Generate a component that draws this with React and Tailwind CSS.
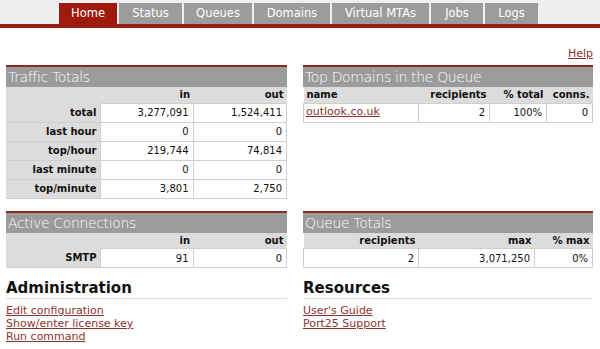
import React from 'react';

const tabs = [
    { label: 'Home', w: 'w-[58px]', active: true },
    { label: 'Status', w: 'w-[63px]' },
    { label: 'Queues', w: 'w-[68px]' },
    { label: 'Domains', w: 'w-[76px]' },
    { label: 'Virtual MTAs', w: 'w-[97px]' },
    { label: 'Jobs', w: 'w-[52px]' },
    { label: 'Logs', w: 'w-[53px]' },
];

const Panel = ({ title, children }) => (
    <div className="border-t-2 border-[#8a2a22]">
        <div className="h-[20px] bg-[#9b9b9b] text-white text-[14px] font-extralight leading-[20px] px-[2px] tracking-tight">
            {title}
        </div>
        {children}
    </div>
);

const td = 'border border-[#d0d0d0] bg-white text-right px-[4px] h-[19px]';
const th = 'bg-[#dcdcdc] font-bold text-right px-[3px] h-[16px]';
const lbl = 'bg-[#dcdcdc] font-bold text-right px-[3px] border-b border-[#d0d0d0]';

const Link = ({ children, className = '' }) => (
    <a href="#" className={`text-[#8a3530] underline ${className}`}>{children}</a>
);

export default function App() {
    const traffic = [
        ['total', '3,277,091', '1,524,411'],
        ['last hour', '0', '0'],
        ['top/hour', '219,744', '74,814'],
        ['last minute', '0', '0'],
        ['top/minute', '3,801', '2,750'],
    ];

    return (
        <div className="w-[600px] h-[349px] bg-white overflow-hidden text-[#111]" style={{ fontFamily: '"DejaVu Sans", Verdana, sans-serif' }}>
            {/* tab bar */}
            <div className="bg-[#efefef] pt-[3px]">
                <div className="flex gap-[2px] pl-[59px]">
                    {tabs.map(t => (
                        <div
                            key={t.label}
                            className={`${t.w} h-[21px] text-center text-[11.5px] leading-[21px] text-white ${t.active ? 'bg-[#a01a0b]' : 'bg-[#9c9c9c]'}`}
                        >
                            {t.label}
                        </div>
                    ))}
                </div>
            </div>
            <div className="h-[4px] bg-[#9c1c10]"></div>

            <div className="flex justify-end pr-[7px] pt-[19px] h-[37px] text-[11px] leading-[13px]">
                <Link>Help</Link>
            </div>

            <div className="flex gap-[16px] pl-[6px] pr-[7px] text-[10px]">
                {/* left column */}
                <div className="w-[281px] flex flex-col">
                    <Panel title="Traffic Totals">
                        <table className="w-full border-collapse">
                            <thead>
                                <tr>
                                    <th className={`${th} w-[94px]`}></th>
                                    <th className={`${th} w-[93px]`}>in</th>
                                    <th className={th}>out</th>
                                </tr>
                            </thead>
                            <tbody>
                                {traffic.map(r => (
                                    <tr key={r[0]}>
                                        <td className={lbl}>{r[0]}</td>
                                        <td className={td}>{r[1]}</td>
                                        <td className={td}>{r[2]}</td>
                                    </tr>
                                ))}
                            </tbody>
                        </table>
                    </Panel>

                    <div className="mt-[12px]">
                        <Panel title="Active Connections">
                            <table className="w-full border-collapse">
                                <thead>
                                    <tr>
                                        <th className={`${th} w-[94px]`}></th>
                                        <th className={`${th} w-[93px]`}>in</th>
                                        <th className={th}>out</th>
                                    </tr>
                                </thead>
                                <tbody>
                                    <tr>
                                        <td className={lbl}>SMTP</td>
                                        <td className={td}>91</td>
                                        <td className={td}>0</td>
                                    </tr>
                                </tbody>
                            </table>
                        </Panel>
                    </div>

                    <div className="mt-[11px]">
                        <h2 className="text-[15px] font-bold leading-[18px] pb-[1px] border-b border-[#dddddd]">Administration</h2>
                        <div className="flex flex-col items-start text-[11px] leading-[13px] pt-[5px]">
                            <Link>Edit configuration</Link>
                            <Link>Show/enter license key</Link>
                            <Link>Run command</Link>
                        </div>
                    </div>
                </div>

                {/* right column */}
                <div className="w-[290px] flex flex-col">
                    <Panel title="Top Domains in the Queue">
                        <table className="w-full border-collapse">
                            <thead>
                                <tr>
                                    <th className={`${th} !text-left w-[115px]`}>name</th>
                                    <th className={`${th} w-[71px]`}>recipients</th>
                                    <th className={`${th} w-[57px]`}>% total</th>
                                    <th className={th}>conns.</th>
                                </tr>
                            </thead>
                            <tbody>
                                <tr>
                                    <td className={`${td} !text-left !px-[2px] text-[11px]`}><Link>outlook.co.uk</Link></td>
                                    <td className={td}>2</td>
                                    <td className={td}>100%</td>
                                    <td className={td}>0</td>
                                </tr>
                            </tbody>
                        </table>
                    </Panel>

                    <div className="mt-[88px]">
                        <Panel title="Queue Totals">
                            <table className="w-full border-collapse">
                                <thead>
                                    <tr>
                                        <th className={`${th} w-[115px]`}>recipients</th>
                                        <th className={`${th} w-[116px]`}>max</th>
                                        <th className={th}>% max</th>
                                    </tr>
                                </thead>
                                <tbody>
                                    <tr>
                                        <td className={td}>2</td>
                                        <td className={td}>3,071,250</td>
                                        <td className={td}>0%</td>
                                    </tr>
                                </tbody>
                            </table>
                        </Panel>
                    </div>

                    <div className="mt-[11px]">
                        <h2 className="text-[15px] font-bold leading-[18px] pb-[1px] border-b border-[#dddddd]">Resources</h2>
                        <div className="flex flex-col items-start text-[11px] leading-[13px] pt-[5px]">
                            <Link>User's Guide</Link>
                            <Link>Port25 Support</Link>
                        </div>
                    </div>
                </div>
            </div>
        </div>
    );
}
